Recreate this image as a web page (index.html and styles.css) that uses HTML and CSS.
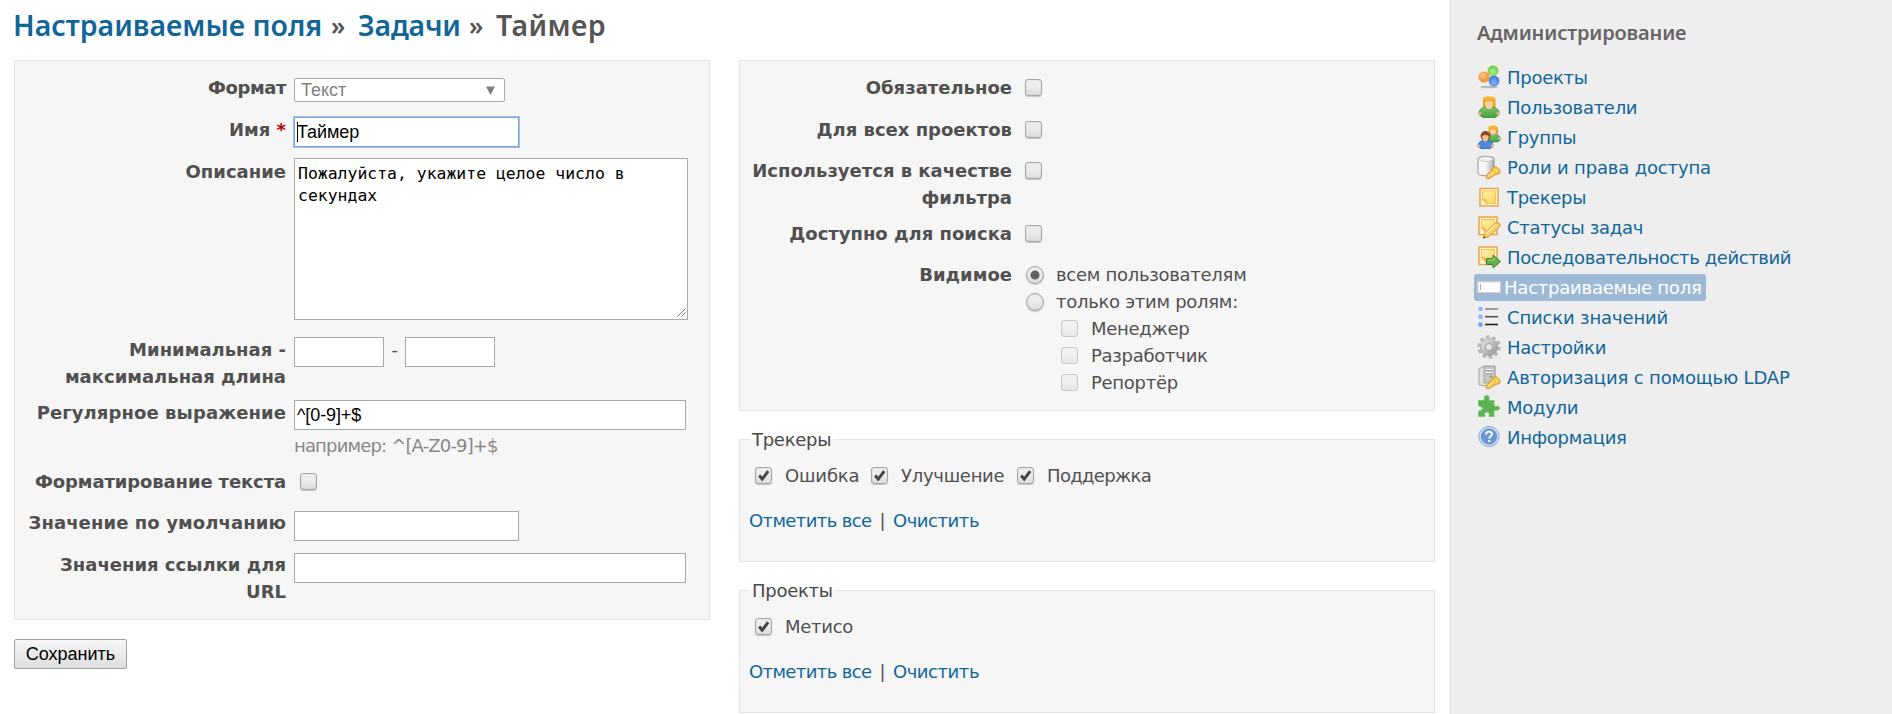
FILE: index.html
```
<!DOCTYPE html>
<html lang="ru">
<head>
<meta charset="utf-8">
<title>Настраиваемые поля » Задачи » Таймер</title>
<link rel="stylesheet" href="styles.css">
</head>
<body>
<div class="page">
  <main class="content">
    <h2 class="title"><a class="crumb-fields">Настраиваемые поля</a><span class="sep">»</span><a class="crumb-issues">Задачи</a><span class="sep">»</span><span class="crumb-name">Таймер</span></h2>
    <div class="columns">
      <div class="col">
        <div class="box form-box">
          <div class="row"><label class="formatl">Формат</label><div class="select"><span>Текст</span><svg width="9" height="9" viewBox="0 0 9 9"><path d="M0 0.5h9L4.5 9z" fill="#808080"/></svg></div></div>
          <div class="row"><label>Имя <span class="required">*</span></label><div class="input medium focused"><i class="caret"></i>Таймер</div></div>
          <div class="row row-desc"><label>Описание</label><div class="textarea">Пожалуйста, укажите целое число в секундах<svg class="grip" width="9" height="9" viewBox="0 0 9 9"><path d="M0.5 8.500L8.500 .5M4.500 8.500L8.500 4.500" stroke="#777" fill="none"/></svg></div></div>
          <div class="row row-len"><label>Минимальная - максимальная длина</label><div class="input short"></div><span class="dash">-</span><div class="input short"></div></div>
          <div class="row row-regex"><label class="wide">Регулярное выражение</label><div><div class="input long">^[0-9]+$</div><em class="hint">например: ^[A-Z0-9]+$</em></div></div>
          <div class="row row-fmt"><label class="fmtl">Форматирование текста</label><input type="checkbox" class="check"></div>
          <div class="row row-default"><label class="wide">Значение по умолчанию</label><div class="input medium"></div></div>
          <div class="row row-url"><label>Значения ссылки для URL</label><div class="input long"></div></div>
        </div>
        <button class="submit">Сохранить</button>
      </div>
      <div class="col">
        <div class="box flags-box">
          <div class="row"><label>Обязательное</label><input type="checkbox" class="check"></div>
          <div class="row row-b"><label>Для всех проектов</label><input type="checkbox" class="check"></div>
          <div class="row row-filter"><label>Используется в качестве фильтра</label><input type="checkbox" class="check"></div>
          <div class="row row-b"><label>Доступно для поиска</label><input type="checkbox" class="check"></div>
          <div class="row"><label>Видимое</label>
            <div class="visibility">
              <div class="opt"><input type="radio" name="v" class="radio" checked>всем пользователям</div>
              <div class="opt"><input type="radio" name="v" class="radio">только этим ролям:</div>
              <div class="opt role"><input type="checkbox" class="check" disabled>Менеджер</div>
              <div class="opt role"><input type="checkbox" class="check" disabled>Разработчик</div>
              <div class="opt role"><input type="checkbox" class="check" disabled>Репортёр</div>
            </div>
          </div>
        </div>
        <fieldset class="group">
          <legend>Трекеры</legend>
          <div class="choices"><span class="choice first"><input type="checkbox" class="check" checked>Ошибка</span><span class="choice second"><input type="checkbox" class="check" checked>Улучшение</span><span class="choice third"><input type="checkbox" class="check" checked>Поддержка</span></div>
          <p class="toggles"><a>Отметить все</a><span>|</span><a class="clear">Очистить</a></p>
        </fieldset>
        <fieldset class="group">
          <legend>Проекты</legend>
          <div class="choices"><span class="choice"><input type="checkbox" class="check" checked>Метисо</span></div>
          <p class="toggles"><a>Отметить все</a><span>|</span><a class="clear">Очистить</a></p>
        </fieldset>
      </div>
    </div>
  </main>
  <aside class="sidebar">
    <svg width="0" height="0" class="defs">
      <defs>
        <linearGradient id="note" x1="0" y1="0" x2="1" y2="1"><stop offset="0" stop-color="#fff3ae"/><stop offset="1" stop-color="#fbd55c"/></linearGradient>
        <linearGradient id="cyl" x1="0" x2="1" y1="0" y2="0"><stop offset="0" stop-color="#fafafa"/><stop offset=".5" stop-color="#f4f4f4"/><stop offset="1" stop-color="#a9a9a9"/></linearGradient>
        <radialGradient id="og" cx=".4" cy=".35"><stop offset="0" stop-color="#ffc98a"/><stop offset="1" stop-color="#f3953a"/></radialGradient>
        <radialGradient id="gg" cx=".5" cy=".6"><stop offset="0" stop-color="#b4f08c"/><stop offset="1" stop-color="#70cf4e"/></radialGradient>
        <radialGradient id="bg" cx=".5" cy=".65"><stop offset="0" stop-color="#86b8fb"/><stop offset="1" stop-color="#4580e0"/></radialGradient>
        <linearGradient id="hair" x1="0" y1="0" x2="0" y2="1"><stop offset="0" stop-color="#fbc13d"/><stop offset="1" stop-color="#e58b12"/></linearGradient>
        <linearGradient id="green" x1="0" y1="0" x2="0" y2="1"><stop offset="0" stop-color="#7cc46b"/><stop offset="1" stop-color="#48a040"/></linearGradient>
        <linearGradient id="gear" x1="0" y1="0" x2="1" y2="1"><stop offset="0" stop-color="#d9d9d9"/><stop offset="1" stop-color="#a0a0a0"/></linearGradient>
        <g id="key"><path d="M19 11.500l4 3.700-.6 3.500-4.200 1-6.200 4-2.700-.6.200-3 5.300-4.800.6-2.500z" fill="#f6c544" stroke="#d58c24" stroke-width=".9"/><path d="M11 21.500l6-5" stroke="#ffeb9c" stroke-width="1.200"/><circle cx="19.500" cy="15.500" r="1.100" fill="#fff2ba"/></g>
        <g id="sticky"><path d="M3 3.500h18v17.500H3z" fill="#fff6d2" stroke="#efa34a" stroke-width="1.500"/><path d="M5.500 6h13v12.500h-7L5.500 13z" fill="url(#note)" stroke="#f3b93b" stroke-width=".8"/><path d="M4.500 13.500l5 .5 1.500 5.500H4.500z" fill="#f7b84d"/><path d="M4.500 14l5.500 5.500H4.500z" fill="#fff8e0"/></g>
      </defs>
    </svg>
    <h3 class="side-title">Администрирование</h3>
    <ul class="menu">
      <li><a><svg viewBox="0 0 24 24"><ellipse cx="12" cy="22" rx="9" ry="1.300" fill="#aaa" opacity=".8"/><circle cx="16" cy="5.700" r="5.200" fill="url(#gg)" stroke="#8cdc68" stroke-width=".6"/><circle cx="7" cy="12" r="5.600" fill="url(#og)"/><circle cx="17" cy="16" r="5.400" fill="url(#bg)"/></svg>Проекты</a></li>
      <li><a><svg viewBox="0 0 24 24"><path d="M1.500 19c.3-4 3-6.500 7-7h7c4 .5 6.800 3 7 7l-1.500 1.500-3 2H6l-3-2z" fill="url(#green)" stroke="#388b36" stroke-width=".8"/><circle cx="2.800" cy="18.500" r="1.700" fill="#edb183"/><circle cx="21.200" cy="18.500" r="1.700" fill="#edb183"/><path d="M6 3c0-2 12-3 12.500 1v7.500c-2 1.700-10.500 1.700-12.500 0z" fill="url(#hair)"/><path d="M8 7.500q4-2.500 8.300 0c0 4-1.500 6.500-4.200 6.500S8 11.500 8 7.500z" fill="#f8cfa8"/></svg>Пользователи</a></li>
      <li><a><svg viewBox="0 0 24 24"><path d="M10 15c0-3 2-5.500 5-6h3c3.500.5 5.500 3 5.500 5.500L21 17h-8z" fill="url(#green)" stroke="#388b36" stroke-width=".7"/><circle cx="22.500" cy="13.500" r="1.300" fill="#edb183"/><path d="M11.500 2.500c1-3 9-3 9.500.5v5c-2 1.300-8 1.300-9.500 0z" fill="url(#hair)"/><path d="M13 5q3-1.500 6.300 0c0 3-1 4.800-3.200 4.800S13 8 13 5z" fill="#f8cfa8"/><path d="M1 21.500c0-3.500 2-5.500 5-6h5c3 .5 5 2.500 5 6l-3 2H4z" fill="#4d88de" stroke="#2c5fb4" stroke-width=".8"/><circle cx="1.700" cy="21" r="1.500" fill="#edb183"/><circle cx="15.200" cy="21" r="1.500" fill="#edb183"/><circle cx="8.500" cy="11" r="4.900" fill="#8b4b25"/><path d="M5.200 11q3-2 6.500 0c0 3.500-1.200 5.500-3.300 5.500s-3.200-2-3.200-5.500z" fill="#f5c198"/></svg>Группы</a></li>
      <li><a class="roles"><svg viewBox="0 0 24 24"><path d="M1 3.500C1 .5 17 .5 17 3.500v15c0 3-16 3-16 0z" fill="url(#cyl)" stroke="#949494"/><ellipse cx="9" cy="4" rx="7.300" ry="2.500" fill="#f1f1f1" stroke="#b7b7b7" stroke-width=".7"/><use href="#key"/></svg>Роли и права доступа</a></li>
      <li><a><svg viewBox="0 0 24 24"><use href="#sticky"/></svg>Трекеры</a></li>
      <li><a><svg viewBox="0 0 24 24"><use href="#sticky" transform="translate(-1 -1.500)"/><path d="M6.500 23l1.500-5 10-9.500q3.500-2 5 .5.800 2-1 3.500L11.500 22z" fill="#f8cd62" stroke="#d28f37" stroke-width=".9"/><path d="M9 18.500l10-9" stroke="#fff0b5" stroke-width="1.500"/><path d="M6 23.500l.8-2.500 2 1.800z" fill="#6b4a25"/></svg>Статусы задач</a></li>
      <li><a class="tight"><svg viewBox="0 0 24 24"><use href="#sticky" transform="translate(-1 -1.500)"/><path d="M9.500 13.500h6.500V10l7.500 6.500-7.500 6.500v-3.500H9.500z" fill="#66b04c" stroke="#39872c"/><path d="M10.500 15h6.500v-2.500" fill="none" stroke="#a2d98c"/></svg>Последовательность действий</a></li>
      <li><a class="selected"><svg viewBox="0 0 24 24"><path d="M0 6h24v12H0z" fill="#d3d0cb"/><path d="M1.500 7.500h21.500v9.500H1.500z" fill="#fff"/><path d="M3.500 9v6" stroke="#aaa"/></svg>Настраиваемые поля</a></li>
      <li><a class="roles"><svg viewBox="0 0 24 24"><g fill="#8eb6f4"><path d="M1.500 2h4v4h-4zM1.500 9.700h4v4h-4z"/><path d="M1.500 17.500h4v4h-4z" fill="#6b9df0"/></g><g fill="none" stroke-width="1.600"><path d="M8 4h13" stroke="#888"/><path d="M8 11.700h13" stroke="#555"/><path d="M8 19.500h13" stroke="#222"/></g></svg>Списки значений</a></li>
      <li><a><svg viewBox="0 0 24 24"><circle cx="12" cy="12" r="9.800" fill="none" stroke="#909090" stroke-width="3.400" stroke-dasharray="3.100 3.057"/><circle cx="12" cy="12" r="6.200" fill="none" stroke="#969696" stroke-width="5.600"/><circle cx="12" cy="12" r="9.800" fill="none" stroke="#c6c6c6" stroke-width="2.400" stroke-dasharray="2.100 4.057" stroke-dashoffset="-.5"/><circle cx="12" cy="12" r="6.100" fill="none" stroke="url(#gear)" stroke-width="4.600"/><circle cx="12" cy="12" r="3.500" fill="#e6e6e6" stroke="#999" stroke-width=".8"/></svg>Настройки</a></li>
      <li><a class="roles"><svg viewBox="0 0 24 24"><path d="M2 4l5-3h11v17l-5 3.500L2 20z" fill="#dedede" stroke="#a5a5a5"/><path d="M7 1.500h11V18H7z" fill="#c5c5c5" stroke="#999" stroke-width=".7"/><path d="M9 4.500h7M9 7.500h7" stroke="#fff" stroke-width="1.200"/><path d="M9 5.700h7M9 8.700h7" stroke="#888" stroke-width=".7"/><circle cx="14" cy="11.500" r="1" fill="#54a846"/><use href="#key"/></svg>Авторизация с помощью LDAP</a></li>
      <li><a><svg viewBox="0 0 24 24"><path d="M1.500 5.500H6.500q1.500-1 .8-2.500Q7 .5 9.700.5T12 3q-.7 1.500.8 2.500H17v5q1 1.500 2.500.8 3-.5 3 1.900t-3 1.900q-1.500-.7-2.500.8v5.600h-4.700q-.8-1 .2-2.500 0-2-2.500-2t-2.500 2q1 1.500 0 2.500H1.500v-5q1-1.300 2-.8 1.800-.3 1.800-2.200T3.500 11.300q-1 .5-2-.8z" fill="#5cb353" stroke="#7ac66d"/></svg>Модули</a></li>
      <li><a><svg viewBox="0 0 24 24"><circle cx="12" cy="11.500" r="10.200" fill="#c5d9f0" stroke="#8fb0d8"/><circle cx="12" cy="11.500" r="7.600" fill="#6a97d3" stroke="#5580bd" stroke-width=".7"/><path d="M9 9.500c0-3.800 6-3.700 6-.3 0 2.200-2.800 2-2.800 4.200" fill="none" stroke="#fff" stroke-width="1.900"/><circle cx="12.200" cy="16" r="1.200" fill="#fff"/></svg>Информация</a></li>
    </ul>
  </aside>
</div>
</body>
</html>
```
FILE: styles.css
```
* { box-sizing: border-box; }
html, body { margin: 0; height: 714px; overflow: hidden; }
body {
  background: #fff;
  color: #505050;
  font: 18px/27px "DejaVu Sans", Verdana, sans-serif;
  letter-spacing: -.28px;
}
a { color: #169; text-decoration: none; }
.page { display: flex; height: 714px; }
.content { width: 1450px; padding: 0 14px; }

.title {
  margin: 0;
  height: 60px;
  padding: 4px 0 0 0;
  font: 600 28.5px/42px "Noto Sans", "Open Sans", sans-serif;
  color: #555;
  display: flex;
  letter-spacing: 0;
}
.crumb-fields { width: 318px; margin-left: -1px; }
.crumb-issues { width: 111px; letter-spacing: -.2px; }
.sep { width: 27px; color: #555; font-size: 25px; }
.crumb-name { letter-spacing: .4px; }

.columns { display: flex; gap: 29px; }
.col { width: 696px; flex: none; }
.box { background: #f6f6f6; border: 1px solid #e4e4e4; padding-top: 13px; }
.form-box { height: 560px; }
.flags-box { height: 351px; }

.row { display: flex; align-items: flex-start; height: 42px; }
.row label {
  width: 264px;
  margin: 0 8px 0 7px;
  text-align: right;
  font-weight: bold;
  letter-spacing: 0;
  flex: none;
}
.row label.formatl { letter-spacing: -.4px; }
.row label.fmtl { letter-spacing: -.12px; }
.row label.wide { letter-spacing: .09px; }
.required { color: #b00; }
.row-desc { height: 178px; }
.row-len { height: 63px; }
.row-regex { height: 69px; }
.row-fmt { height: 41px; }
.row-fmt .check { margin-left: 6px; }
.row-default .input, .row-url .input { margin-top: 2px; }

.input, .textarea, .select {
  background: #fff;
  border: 1px solid #a9a9a9;
  color: #000;
  letter-spacing: 0;
}
.input {
  height: 30px;
  margin-top: 1px;
  padding: 1px 2px;
  font: 18px/27px "Liberation Sans", Arial, sans-serif;
  letter-spacing: -.1px;
}
.medium { width: 225px; }
.long { width: 392px; }
.short { width: 90px; }
.focused { border-color: #7ba3e6; box-shadow: 0 0 0 1px #a3bff0; position: relative; }
.caret { position: absolute; left: 2px; top: 4px; width: 1px; height: 20px; background: #000; }
.select {
  display: flex;
  justify-content: space-between;
  align-items: center;
  width: 211px;
  height: 24px;
  margin-top: 4px;
  padding: 0 9px 0 6px;
  border-radius: 2px;
  font: 18px/22px "Liberation Sans", Arial, sans-serif;
  color: #808080;
}
.textarea {
  position: relative;
  width: 394px;
  height: 162px;
  padding: 4px 60px 0 3px;
  font: 16.440px/22px "DejaVu Sans Mono", monospace;
}
.grip { position: absolute; right: 1px; bottom: 2px; }
.dash { width: 21px; text-align: center; }
.hint { display: block; font-style: normal; color: #888; letter-spacing: -.84px; margin-top: 2px; }

.check, .radio {
  appearance: none;
  flex: none;
  width: 17px;
  height: 17px;
  margin: 5px 0 0;
  border: 1px solid #a6a6a6;
  border-radius: 3px;
  background: linear-gradient(#ededed 38%, #dcdcdc);
  box-shadow: 0 1px 1px rgba(0, 0, 0, .2), inset 0 0 1px rgba(0, 0, 0, .2);
}
.check:checked {
  background: url("data:image/svg+xml,%3Csvg xmlns='http://www.w3.org/2000/svg' viewBox='0 0 15 15'%3E%3Cpath d='M3.200 7.500l3 3.600 6-8' fill='none' stroke='%23444' stroke-width='2.900'/%3E%3C/svg%3E"), linear-gradient(#ededed 38%, #dedede);
}
.check:disabled { opacity: .55; box-shadow: inset 0 0 1px rgba(0, 0, 0, .2); }
.radio { width: 18px; height: 18px; border-radius: 50%; }
.radio:checked { background: radial-gradient(circle, #606060 4px, transparent 5px), linear-gradient(#ededed 38%, #dedede); }

.submit {
  display: block;
  margin-top: 19px;
  width: 113px;
  height: 30px;
  padding: 0;
  border: 1px solid #a0a0a0;
  border-radius: 2px;
  background: linear-gradient(#f6f6f6, #dedede);
  font: 18px/27px "Liberation Sans", Arial, sans-serif;
  color: #000;
}

.flags-box .row label { margin: 0 13px 0 8px; }
.flags-box .row .check { margin-top: 5px; }
.flags-box .row-b { height: 41px; }
.flags-box .row-filter { height: 63px; }
.opt { display: flex; height: 27px; }
.opt .radio { margin: 5px 12px 0 1px; }
.opt.role { padding-left: 36px; }
.flags-box .opt .check { margin: 5px 13px 0 0; }

.group {
  height: 136px;
  margin: 15px 0 0;
  padding: 9px 9px 0;
  border: 1px solid #e4e4e4;
  background: #f6f6f6;
  min-width: 0;
}
.group legend { padding: 0 3px; color: #484848; }
.choices { display: flex; padding-left: 6px; }
.choice { display: flex; }
.choice .check { margin: 5px 13px 0 0; }
.first { width: 116px; letter-spacing: -.15px; }
.second { width: 146px; }
.third { letter-spacing: -.65px; }
.toggles { display: flex; gap: 8px; margin: 18px 0 0; letter-spacing: -.62px; }
.clear { letter-spacing: -.44px; }

.sidebar { flex: 1; background: #eee; border-left: 1px solid #ddd; padding: 18px 0 0 26px; }
.defs { position: absolute; }
.side-title { margin: 0; font: 600 20px/30px "Noto Sans", "Open Sans", sans-serif; color: #666; letter-spacing: -.16px; }
.menu { list-style: none; margin: 14px 0 0; padding: 0; }
.menu li { height: 30px; display: flex; }
.menu a { display: flex; align-items: center; gap: 6px; height: 30px; white-space: nowrap; }
.menu a svg { width: 24px; height: 24px; flex: none; margin-top: -1px; }
.menu .tight { letter-spacing: -.4px; }
.menu .roles { letter-spacing: -.16px; }
.menu .selected {
  height: 27px;
  margin: 2px 0 0 -3px;
  padding: 0 4px 0 3px;
  gap: 3px;
  border-radius: 3px;
  background: #9db9d5;
  color: #fff;
  letter-spacing: -.22px;
}
```
